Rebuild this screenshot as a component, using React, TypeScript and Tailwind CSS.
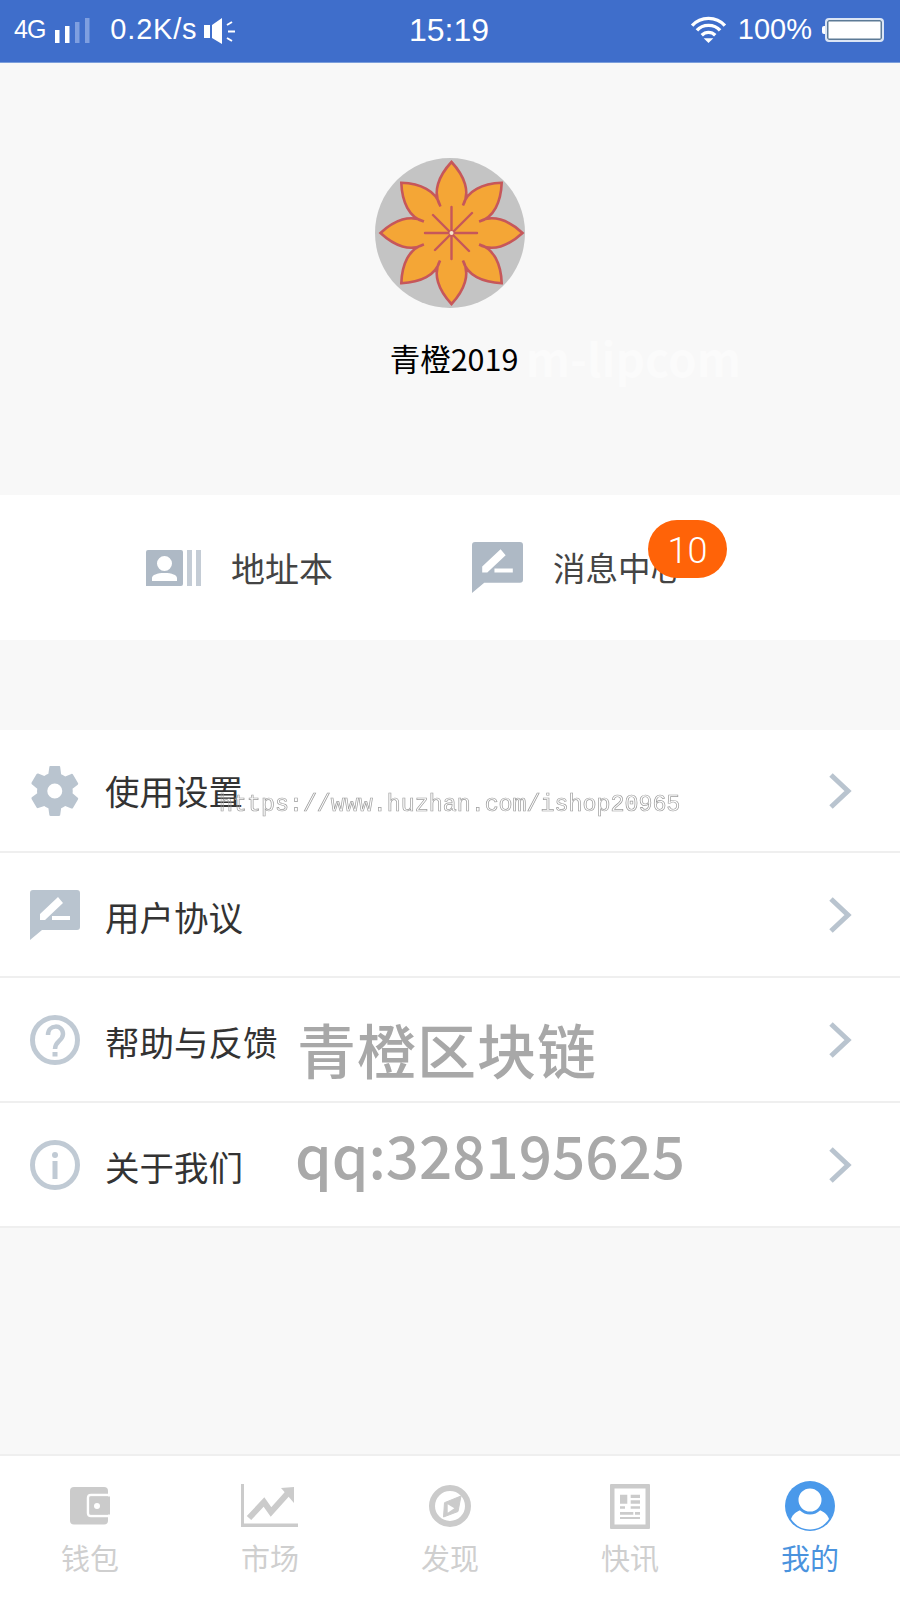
const cjk = "[font-family:'Noto_Sans_CJK_SC','Noto_Sans',sans-serif]";

function Flower() {
  const petals = [0, 45, 90, 135, 180, 225, 270, 315];
  const rot = (x: number, y: number, a: number) => {
    const r = (a * Math.PI) / 180;
    const px = x * Math.cos(r) - y * Math.sin(r) + 76.5;
    const py = x * Math.sin(r) + y * Math.cos(r) + 75;
    return `${px.toFixed(2)} ${py.toFixed(2)}`;
  };
  const d =
    petals
      .map((a, i) => {
        const start = i === 0 ? `M${rot(-11.5, -27.7, a)} ` : "";
        return `${start}C${rot(-19, -41, a)} ${rot(-13, -57, a)} ${rot(0, -71, a)} C${rot(13, -57, a)} ${rot(19, -41, a)} ${rot(11.5, -27.7, a)}`;
      })
      .join(" ") + " Z";
  return (
    <svg width="150" height="150" viewBox="0 0 150 150">
      <circle cx="75" cy="75" r="75" fill="#c4c4c4" />
      <path d={d} fill="#f4a636" stroke="#c6575a" strokeWidth="2.600" strokeLinejoin="miter" />
      <g stroke="#c6575a" strokeWidth="2.400" strokeLinecap="round">
        <path d="M76.500 49 V101 M50 75 H102 M58 57 L94 93 M97 55 L60 92" />
      </g>
      <circle cx="76.500" cy="75" r="2" fill="#f6e6c8" />
    </svg>
  );
}

function NoteIcon({ size, color }: { size: number; color: string }) {
  return (
    <svg width={size} height={size} viewBox="0 0 50 50">
      <path
        fill={color}
        fillRule="evenodd"
        d="M3 0 H47 Q50 0 50 3 V37 Q50 40 47 40 H12 L0 50 V3 Q0 0 3 0 Z M10 30 V24 L28 7 L33 13 L15 30 Z M22 26 H40 V30 H22 Z"
      />
    </svg>
  );
}

function Contact() {
  return (
    <svg width="56" height="36" viewBox="0 0 56 36">
      <path
        fill="#aeb9c5"
        fillRule="evenodd"
        d="M2 0 H35 Q37 0 37 2 V34 Q37 36 35 36 H0 V2 Q0 0 2 0 Z M18.500 6 A7.500 7.500 0 1 0 18.500 21 A7.500 7.500 0 1 0 18.500 6 Z M6 31 H31 V28 C31 25 26 23 18.500 23 C11 23 6 25 6 28 Z"
      />
      <rect x="41" y="0" width="5" height="36" fill="#c4ccd5" />
      <rect x="50" y="0" width="5" height="36" fill="#c4ccd5" />
    </svg>
  );
}

function Gear() {
  return (
    <svg width="50" height="50" viewBox="1.200 1 21 22" fill="#b9c4cf">
      <path d="M19.400 13c.1-.3.1-.7.1-1s0-.7-.1-1l2.300-1.800c.2-.2.3-.4.1-.7l-2.200-3.800c-.1-.2-.4-.3-.7-.2l-2.700 1.100c-.6-.4-1.200-.8-1.800-1L14 1.500c0-.3-.2-.5-.5-.5h-3.800c-.3 0-.5.2-.5.500l-.4 2.900c-.7.200-1.300.6-1.800 1L4.300 4.300c-.3-.1-.5 0-.7.200L1.400 8.300c-.1.300-.1.500.1.700L3.900 11c0 .3-.1.700-.1 1s0 .7.1 1l-2.400 1.800c-.2.200-.2.400-.1.700l2.200 3.800c.2.200.4.300.7.200L7 18.600c.6.400 1.100.8 1.800 1l.4 2.900c0 .3.200.5.500.5h3.800c.3 0 .5-.2.5-.5l.4-2.900c.6-.2 1.200-.6 1.800-1l2.700 1.100c.3.100.6 0 .7-.2l2.200-3.800c.2-.3.100-.5-.1-.7L19.400 13z M11.600 8.700a3.300 3.300 0 1 1 0 6.600a3.300 3.300 0 1 1 0-6.600z" fillRule="evenodd" />
    </svg>
  );
}

function Help() {
  return (
    <svg width="50" height="50" viewBox="0 0 50 50">
      <circle cx="25" cy="25" r="22.500" fill="none" stroke="#c0cad4" strokeWidth="5" />
      <path d="M18 20 C18 9 33 9 33 19 C33 26 25 26 25 34" fill="none" stroke="#c0cad4" strokeWidth="4.500" />
      <rect x="22.500" y="37" width="5" height="4.500" fill="#c0cad4" />
    </svg>
  );
}

function Info() {
  return (
    <svg width="50" height="50" viewBox="0 0 50 50">
      <circle cx="25" cy="25" r="22.500" fill="none" stroke="#c0cad4" strokeWidth="5" />
      <circle cx="25" cy="15" r="3" fill="#c0cad4" />
      <rect x="22.500" y="21" width="5" height="18" fill="#c0cad4" />
    </svg>
  );
}

function Chevron() {
  return (
    <svg width="24" height="36" viewBox="0 0 24 36" fill="none">
      <path d="M3 2 L20 18 L3 34" stroke="#b9c4cf" strokeWidth="5" />
    </svg>
  );
}

const WalletIcon = () => (
  <svg width="40" height="38" viewBox="0 0 40 38">
    <rect x="0" y="0" width="38" height="37.500" rx="4" fill="#cbcbcb" />
    <path d="M38 8 H21 Q18 8 18 11 V26 Q18 29 21 29 H38" fill="none" stroke="#fff" strokeWidth="2.500" />
    <rect x="19.500" y="9.500" width="20.500" height="18" fill="#cbcbcb" />
    <circle cx="27" cy="19" r="3" fill="#fff" />
  </svg>
);
const ChartIcon = () => (
  <svg width="58" height="44" viewBox="0 0 58 44">
    <rect x="0" y="0" width="3" height="43" fill="#cbcbcb" />
    <rect x="0" y="39.500" width="57" height="3.500" fill="#cbcbcb" />
    <path d="M8 34 L23 18 L30 28 L47 9" fill="none" stroke="#cbcbcb" strokeWidth="6" />
    <path d="M40 4 L53 3 L53 19 Z" fill="#cbcbcb" />
  </svg>
);
const CompassIcon = () => (
  <svg width="44" height="44" viewBox="0 0 44 44">
    <circle cx="22" cy="22" r="18" fill="none" stroke="#cbcbcb" strokeWidth="6" />
    <path fill="#cbcbcb" stroke="#cbcbcb" strokeLinejoin="round" d="M33 12 L16.500 18.700 L15.500 33 L30 27.500 Z" />
    <path fill="#fff" d="M19.700 20.300 L26.300 24.300 L19.700 28.700 Z" />
  </svg>
);
const NewsIcon = () => (
  <svg width="40" height="45" viewBox="0 0 40 45">
    <path fill="#cbcbcb" fillRule="evenodd" d="M1 0 H39 Q40 0 40 1 V44 Q40 45 39 45 H1 Q0 45 0 44 V1 Q0 0 1 0 Z M4.500 4.500 V40.500 H35.500 V4.500 Z" />
    <path fill="#cbcbcb" d="M10 10.700 H17.300 V19.700 H10 Z M20.700 10.700 H30 V14 H20.700 Z M20.700 16.300 H30 V19.700 H20.700 Z M10 22.300 H15 V24.700 H10 Z M20.700 22.300 H30 V24.700 H20.700 Z M10 28 H23.300 V30.700 H10 Z M25 28 H30 V30.700 H25 Z M10 33 H30 V35 H10 Z" />
  </svg>
);
const UserIcon = () => (
  <svg width="50" height="50" viewBox="0 0 50 50">
    <circle cx="25" cy="25" r="25" fill="#4a99ea" />
    <path fill="#fff" d="M6 38 C8 32 13 30 18 28 H32 C37 30 42 32 44 38 A22.500 22.500 0 0 1 6 38 Z" />
    <circle cx="25" cy="19" r="13" fill="#fff" stroke="#4a99ea" strokeWidth="3" />
  </svg>
);

function Tab({ icon, label, active }: { icon: React.ReactNode; label: string; active?: boolean }) {
  return (
    <div className="flex flex-1 flex-col items-center">
      <div className="flex h-[56px] items-center justify-center">{icon}</div>
      <span className={`mt-[3px] text-[29px] leading-[40px] ${active ? "text-[#4a93de]" : "text-[#cfcfcf]"}`}>{label}</span>
    </div>
  );
}

function Row({ icon, label, first }: { icon: React.ReactNode; label: string; first?: boolean }) {
  return (
    <div className={`flex items-center border-b-2 border-[#efefef] bg-white pl-[30px] pr-[48px] ${first ? "h-[123px]" : "h-[125px]"}`}>
      <div className="flex w-[50px] justify-center">{icon}</div>
      <span className={`ml-[25px] flex-1 text-[34.500px] text-[#333] ${first ? "" : "mt-[4px]"}`}>{label}</span>
      <Chevron />
    </div>
  );
}

export default function App() {
  return (
    <div className={`relative flex h-[1600px] w-[900px] flex-col overflow-hidden bg-[#f8f8f8] ${cjk}`}>
      <div className="flex h-[63px] items-center border-b border-[#7c9fdc] bg-[#3f6ecb] pb-[3px] pl-[14px] pr-[16px] text-white [font-family:'Liberation_Sans',sans-serif]">
        <div className="flex w-[300px] items-center">
          <span className="text-[25px] tracking-[-1px]">4G</span>
          <svg className="ml-[10px] mt-[2px]" width="35" height="25" viewBox="0 0 35 25">
            <rect x="0" y="12" width="4.500" height="13" fill="#fff" />
            <rect x="10" y="8" width="4.500" height="17" fill="#fff" />
            <rect x="20" y="4" width="4.500" height="21" fill="#7f9fe0" />
            <rect x="30" y="0" width="4.500" height="25" fill="#7f9fe0" />
          </svg>
          <span className="ml-[20px] text-[29px] tracking-[0.800px]">0.2K/s</span>
          <svg className="ml-[7px] mt-[2px]" width="32" height="26" viewBox="0 0 32 26">
            <path fill="#fff" d="M0 7 H6 V20 H0 Z M8 7 L18 0 V26 L8 20 Z" />
            <path stroke="#fff" strokeWidth="2" d="M23 7 L28 4 M24 13.500 H31 M23 20 L28 23" />
          </svg>
        </div>
        <span className="flex-1 text-center text-[32px]">15:19</span>
        <div className="flex w-[300px] items-center justify-end">
          <svg width="37" height="27" viewBox="0 0 38 28" fill="none" stroke="#fff" strokeWidth="3.500">
            <path d="M2 10 C11 0 27 0 36 10 M7 15 C13 8 25 8 31 15 M12 20 C16 16 22 16 26 20" />
            <path d="M14 23 H24 L19 28 Z" fill="#fff" stroke="none" />
          </svg>
          <span className="ml-[11px] text-[29px]">100%</span>
          <div className="ml-[10px] h-[8px] w-[3px] rounded-l-[2px] bg-white" />
          <div className="h-[24px] w-[59px] rounded-[4px] border-2 border-[#dbe5f5] bg-white shadow-[inset_0_0_0_1.500px_#5d7a96]" />
        </div>
      </div>

      <div className="flex h-[432px] flex-col items-center">
        <div className="mt-[95px]"><Flower /></div>
        <div className="relative ml-[8px] mt-[28px] text-[30.500px] leading-[44px] text-black">
          青橙2019
          <span className="absolute left-[136px] top-[-4px] whitespace-nowrap text-[46px] font-bold leading-[50px] text-[#fbfbfb]">m-lipcom</span>
        </div>
      </div>

      <div className="flex h-[145px] items-center bg-white">
        <div className="flex w-[450px] items-center justify-end pr-[117px]">
          <Contact />
          <span className="ml-[29px] text-[34px] text-[#444]">地址本</span>
        </div>
        <div className="relative flex flex-1 items-center pl-[22px]">
          <NoteIcon size={51} color="#aeb9c5" />
          <span className="ml-[30px] text-[32.500px] text-[#444]">消息中心</span>
          <div className="absolute left-[198px] top-[-22px] flex h-[58px] w-[79px] items-center justify-center rounded-[29px] bg-[#ff6308] pt-[4px] text-[36px] font-light text-white [font-family:Roboto,sans-serif]">10</div>
        </div>
      </div>

      <div className="h-[90px]" />

      <div className="relative">
        <Row first icon={<Gear />} label="使用设置" />
        <Row icon={<NoteIcon size={50} color="#b9c4cf" />} label="用户协议" />
        <Row icon={<Help />} label="帮助与反馈" />
        <Row icon={<Info />} label="关于我们" />
        <span className="absolute left-[219px] top-[57px] whitespace-nowrap text-[23.300px] leading-[36px] text-transparent [will-change:transform] [-webkit-text-stroke:0.700px_#9c9c9c] [font-family:'Liberation_Mono',monospace]">https://www.huzhan.com/ishop20965</span>
        <span className="absolute left-[297px] top-[279px] text-[59px] font-medium leading-[80px] tracking-[1px] text-[#a8a8a8]">青橙区块链</span>
        <span className="absolute left-[295px] top-[384px] text-[58.300px] font-medium leading-[80px] text-[#a9a9a9]">qq:328195625</span>
      </div>

      <div className="flex-1" />

      <div className="flex h-[146px] border-t-2 border-[#efefef] bg-white pt-[22px]">
        <Tab icon={<WalletIcon />} label="钱包" />
        <Tab icon={<ChartIcon />} label="市场" />
        <Tab icon={<CompassIcon />} label="发现" />
        <Tab icon={<NewsIcon />} label="快讯" />
        <Tab icon={<UserIcon />} label="我的" active />
      </div>
    </div>
  );
}
